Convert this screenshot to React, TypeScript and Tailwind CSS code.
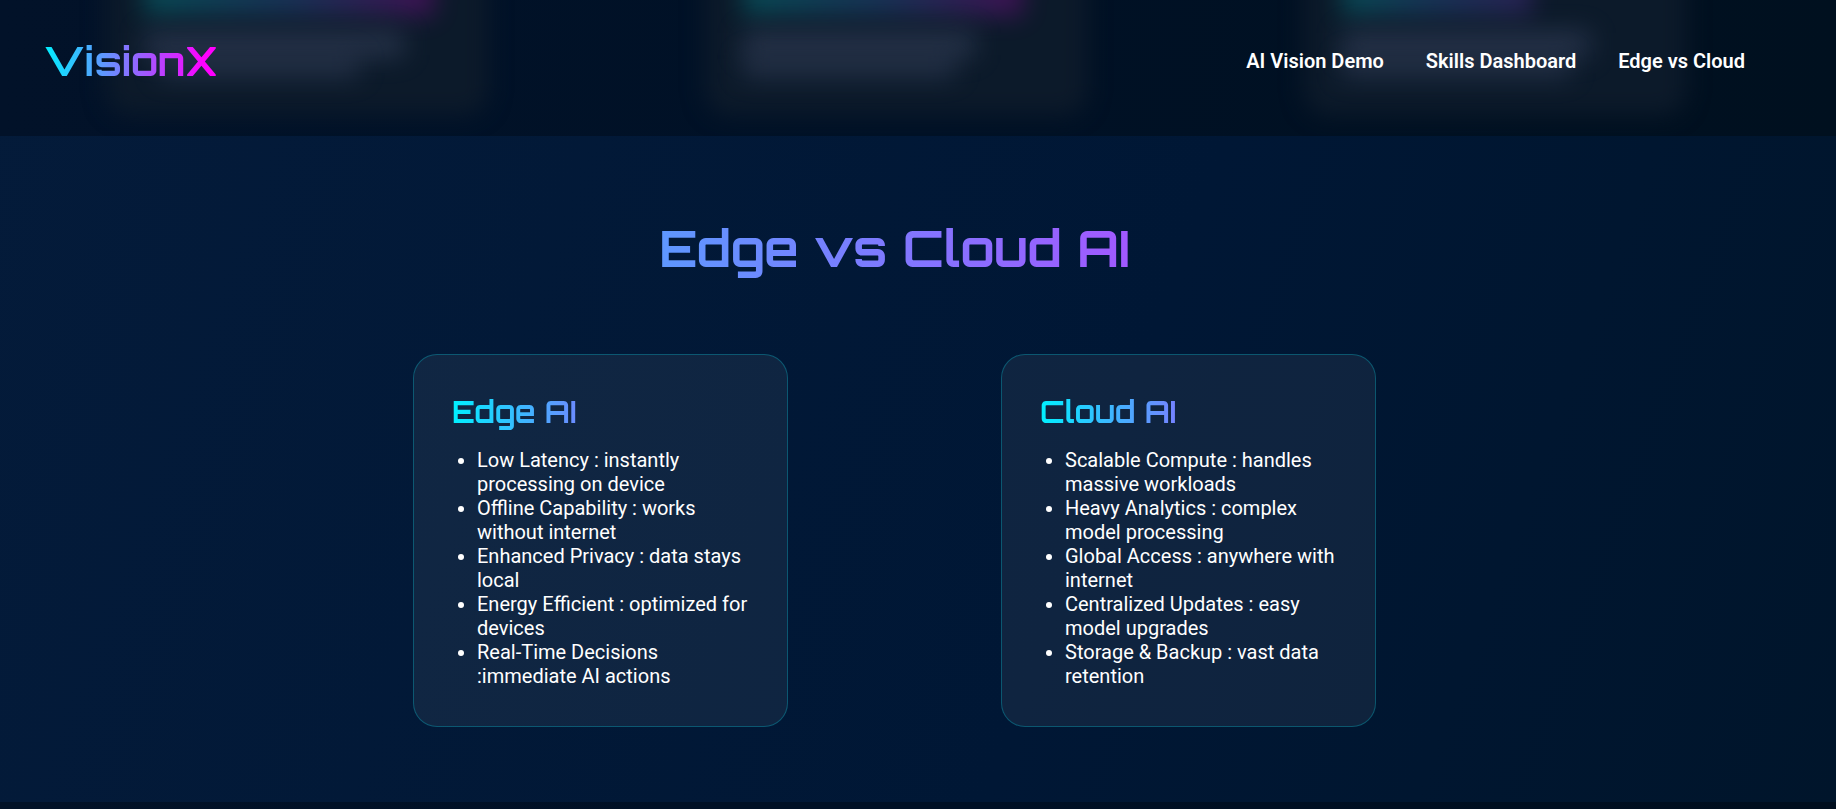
const gradientText =
  "bg-linear-to-r/srgb from-[#00f0ff] to-[#ff00ff] bg-clip-text text-transparent font-bold font-[Orbitron,'DejaVu_Sans',sans-serif]";

const links = [
  { label: "AI Vision Demo", href: "#demo" },
  { label: "Skills Dashboard", href: "#skills" },
  { label: "Edge vs Cloud", href: "#edge-cloud" },
];

const cards = [
  {
    title: "Edge AI",
    items: [
      "Low Latency : instantly processing on device",
      "Offline Capability : works without internet",
      "Enhanced Privacy : data stays local",
      "Energy Efficient : optimized for devices",
      "Real-Time Decisions :immediate AI actions",
    ],
  },
  {
    title: "Cloud AI",
    items: [
      "Scalable Compute : handles massive workloads",
      "Heavy Analytics : complex model processing",
      "Global Access : anywhere with internet",
      "Centralized Updates : easy model upgrades",
      "Storage & Backup : vast data retention",
    ],
  },
];

const glows = [
  { title: "w-[290px] to-[#a000a0]", first: "w-[260px]", second: "w-[200px] ml-[15px]" },
  { title: "w-[280px] to-[#a000a0]", first: "w-[232px]", second: "w-[212px]" },
  { title: "w-[190px] to-[#6030a0]", first: "w-[248px]", second: "w-[228px]" },
];

function HeaderGlow() {
  return (
    <div
      aria-hidden="true"
      className="absolute inset-0 flex justify-between overflow-hidden pr-[150px] pl-[106px]"
    >
      {glows.map((g, i) => (
        <div key={i} className="relative h-[115px] w-[382px]">
          <div className="absolute inset-x-0 -top-10 bottom-0 rounded-3xl bg-[#0c1a2a] blur-[11px]" />
          <div className="relative flex flex-col px-[38px]">
            <div
              className={`-mt-6 h-10 bg-linear-to-r/srgb from-[#00a0a0] via-[#3060a8] opacity-35 blur-[12px] ${g.title}`}
            />
            <div className={`mt-4 h-6 bg-[#2c3850] opacity-85 blur-[13px] ${g.first}`} />
            <div className={`h-5 bg-[#2c3850] opacity-80 blur-[13px] ${g.second}`} />
          </div>
        </div>
      ))}
    </div>
  );
}

export default function App() {
  return (
    <div className="min-h-screen bg-[linear-gradient(110deg,#041b3a,#001735_60%,#00152b)] font-[Roboto,sans-serif] text-white">
      <header className="relative bg-linear-to-r/srgb from-[#021229] via-[#001126] to-[#00101f]">
        <HeaderGlow />
        <div className="relative flex h-[136px] items-center justify-between pr-[91px] pb-[14px] pl-[44px]">
          <a
            href="#home"
            className="bg-linear-to-r/srgb from-[#00f0ff] to-[#ff00ff] to-92% bg-clip-text font-[Orbitron,'DejaVu_Sans',sans-serif] text-[40px] leading-[52px] font-bold text-transparent"
          >
            VisionX
          </a>
          <nav className="flex gap-[42px]">
            {links.map((l) => (
              <a key={l.href} href={l.href} className="text-[20px] leading-6 font-semibold">
                {l.label}
              </a>
            ))}
          </nav>
        </div>
      </header>

      <main id="edge-cloud" className="pt-[80px] pr-[47px] pb-[75px]">
        <h2 className={`text-center text-[50px] leading-[64px] ${gradientText}`}>
          Edge vs Cloud AI
        </h2>
        <div className="mt-[74px] flex flex-wrap justify-evenly gap-y-8 px-[200px]">
          {cards.map((c) => (
            <section
              key={c.title}
              className="w-[375px] rounded-3xl border border-[#00f0ff]/25 bg-white/[0.06] p-[38px]"
            >
              <h3 className={`text-[30px] leading-[38px] ${gradientText}`}>{c.title}</h3>
              <ul className="mt-[17px] list-disc pl-[25px] text-[20px] leading-6">
                {c.items.map((t) => (
                  <li key={t}>{t}</li>
                ))}
              </ul>
            </section>
          ))}
        </div>
      </main>

      <footer className="h-[7px] bg-black/30" />
    </div>
  );
}
